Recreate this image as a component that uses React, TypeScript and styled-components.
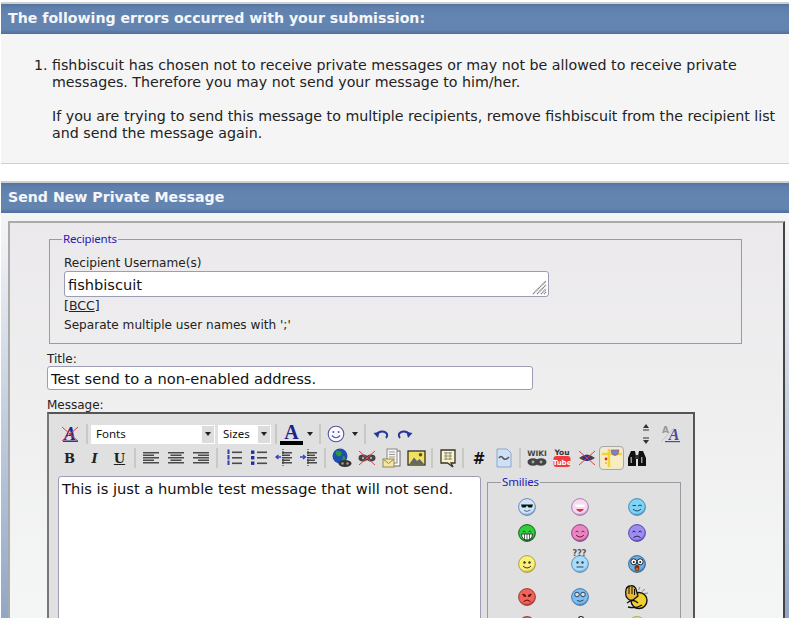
import React from 'react';
import styled, { createGlobalStyle } from 'styled-components';

const GlobalStyle = createGlobalStyle`
  html, body {
    margin: 0;
    padding: 0;
    background: #fff;
  }
  body {
    font-family: "DejaVu Sans", Verdana, sans-serif;
    color: #222;
  }
`;

const QuestionMarks = styled.span`
  position: absolute;
  top: 4px;
  left: 0;
  right: 0;
  text-align: center;
  font-size: 8px;
  line-height: 8px;
  font-weight: 700;
  color: #555;
`;

const Icon = ({ children }: { children: React.ReactNode }) => (
  <svg width="20" height="20" viewBox="0 0 20 20">
    {children}
  </svg>
);

const Lines = ({ rows }: { rows: [number, number][] }) => (
  <>
    {rows.map(([x, w], i) => (
      <rect key={i} x={x} y={4 + i * 2.5} width={w} height="1.5" fill="#4a4a4a" />
    ))}
  </>
);

const RedX = () => (
  <path d="M2 3 L18 17 M18 3 L2 17" stroke="#e0404a" strokeWidth="1" fill="none" />
);

const RemoveFormat = () => (
  <Icon>
    <text x="10" y="16" textAnchor="middle" fontFamily="Liberation Serif" fontWeight="700" fontStyle="italic" fontSize="18" fill="#24248c">A</text>
    <rect x="3" y="16.5" width="15" height="1.4" fill="#24248c" />
    <RedX />
  </Icon>
);

const Caret = styled.span`
  width: 0;
  height: 0;
  border-left: 3.5px solid transparent;
  border-right: 3.5px solid transparent;
  border-top: 4px solid #222;
`;

const Smile = () => (
  <svg width="18" height="18" viewBox="0 0 18 18">
    <circle cx="9" cy="9" r="7.8" fill="#fafaff" stroke="#5555aa" strokeWidth="1.1" />
    <circle cx="6.4" cy="7" r="1" fill="#5555aa" />
    <circle cx="11.6" cy="7" r="1" fill="#5555aa" />
    <path d="M4.8 10.5 Q9 15 13.2 10.5" stroke="#5555aa" strokeWidth="1.1" fill="none" />
  </svg>
);

const Undo = () => (
  <Icon>
    <path d="M7 14 L2.5 9 L8.5 8 Z" fill="#24369c" />
    <path d="M5.5 10.5 C8 6.5 14 6.5 16 10 C16.6 11.5 16 13 15 14" stroke="#24369c" strokeWidth="2" fill="none" />
  </Icon>
);

const Redo = () => (
  <Icon>
    <path d="M13 14 L17.5 9 L11.5 8 Z" fill="#24369c" />
    <path d="M14.5 10.5 C12 6.5 6 6.5 4 10 C3.4 11.5 4 13 5 14" stroke="#24369c" strokeWidth="2" fill="none" />
  </Icon>
);

const OrderedList = () => (
  <Icon>
    {[3.5, 9, 14.5].map((y) => (
      <g key={y}>
        <rect x="3.5" y={y - 2} width="2" height="4.5" fill="#2f3fa8" />
        <rect x="8" y={y} width="10" height="1.6" fill="#4a4a4a" />
      </g>
    ))}
  </Icon>
);

const BulletList = () => (
  <Icon>
    {[3.5, 9, 14.5].map((y) => (
      <g key={y}>
        <rect x="2" y={y - 1} width="3.4" height="3.4" fill="#1e2fa0" />
        <rect x="8" y={y} width="10" height="1.6" fill="#4a4a4a" />
      </g>
    ))}
  </Icon>
);

const Dent = ({ flip }: { flip?: boolean }) => (
  <Icon>
    <Lines rows={[[8, 10], [8, 8], [8, 10], [8, 8], [8, 10]]} />
    <path d="M9 1 V19" stroke="#222" strokeWidth="1" strokeDasharray="1 1" />
    <path d={flip ? 'M1 9 H6 M4 7 L6.5 9 L4 11' : 'M2 9 H7 M4.5 7 L2 9 L4.5 11'} stroke="#3046c0" strokeWidth="1.3" fill="none" />
  </Icon>
);

const Globe = () => (
  <Icon>
    <circle cx="8" cy="8" r="7.5" fill="#1d4fb0" />
    <path d="M4 3 Q8 2 10 5 Q9 9 6 8 Q3 7 4 3 M11 8 Q14 8 13 12 L10 13 Z" fill="#2b9a35" />
    <ellipse cx="13" cy="15.5" rx="6.5" ry="3.4" fill="#333" />
    <circle cx="10.5" cy="15.5" r="1.3" fill="#999" />
    <circle cx="15.5" cy="15.5" r="1.3" fill="#999" />
  </Icon>
);

const Unlink = () => (
  <Icon>
    <ellipse cx="6" cy="10" rx="4.5" ry="3.4" fill="#444" />
    <ellipse cx="14" cy="10" rx="4.5" ry="3.4" fill="#444" />
    <circle cx="6" cy="10" r="1.2" fill="#aaa" />
    <circle cx="14" cy="10" r="1.2" fill="#aaa" />
    <RedX />
  </Icon>
);

const MailDoc = () => (
  <Icon>
    <rect x="11" y="3" width="7" height="15" fill="#fff" stroke="#666" />
    <rect x="5" y="1" width="10" height="14" fill="#f4f4f4" stroke="#888" />
    <path d="M7 4 H13 M7 6.5 H13 M7 9 H13" stroke="#999" strokeWidth="1" />
    <rect x="1" y="11" width="11" height="8" fill="#f3e6a8" stroke="#9a8a45" />
    <path d="M1 11 L6.5 15.5 L12 11" stroke="#9a8a45" fill="none" />
  </Icon>
);

const ImageIcon = () => (
  <Icon>
    <rect x="1" y="3" width="17" height="14" fill="#f2e15a" stroke="#222" strokeWidth="1.2" />
    <circle cx="13.5" cy="6.8" r="1.8" fill="#55502a" />
    <path d="M2 16.5 L7 9.5 L10 13 L12.5 11 L17.5 16.5 Z" fill="#666" />
  </Icon>
);

const Quote = () => (
  <Icon>
    <path d="M3 2 H17 V15 H13 L15 19 L9.5 15 H3 Z" fill="#fbf4bd" stroke="#333" strokeWidth="1.3" />
    <path d="M6 5 H14 M6 8 H14 M6 11 H14 M8 4 V12 M12 4 V12" stroke="#888" strokeWidth="1" />
  </Icon>
);

const Hash = () => (
  <Icon>
    <text x="10" y="15.5" textAnchor="middle" fontFamily="DejaVu Sans" fontWeight="700" fontSize="15" fill="#111">#</text>
  </Icon>
);

const PageIcon = () => (
  <Icon>
    <path d="M3 1 H13 L17 5 V19 H3 Z" fill="#cfe0f4" stroke="#8fa8cc" />
    <path d="M5 10 Q7 7 9 10 T15 9" stroke="#555" strokeWidth="1.6" fill="none" />
  </Icon>
);

const Wiki = () => (
  <svg width="22" height="20" viewBox="0 0 22 20">
    <text x="11" y="8" textAnchor="middle" fontFamily="DejaVu Sans" fontWeight="700" fontSize="7.5" fill="#444">WIKI</text>
    <ellipse cx="7" cy="14" rx="5.5" ry="3.8" fill="#444" />
    <ellipse cx="15" cy="14" rx="5.5" ry="3.8" fill="#444" />
    <circle cx="7" cy="14" r="1.4" fill="#aaa" />
    <circle cx="15" cy="14" r="1.4" fill="#aaa" />
  </svg>
);

const YouTube = () => (
  <svg width="18" height="20" viewBox="0 0 18 20">
    <text x="9" y="7" textAnchor="middle" fontFamily="DejaVu Sans" fontWeight="700" fontSize="7.5" fill="#333">You</text>
    <rect x="0.5" y="8" width="17" height="11" rx="3" fill="#f03c40" />
    <text x="9" y="16.5" textAnchor="middle" fontFamily="DejaVu Sans" fontWeight="700" fontSize="7" fill="#fff">Tube</text>
  </svg>
);

const HiddenEye = () => (
  <Icon>
    <path d="M2 10 Q10 3 18 10 Q10 16 2 10 Z" fill="#444" />
    <circle cx="10" cy="10" r="3" fill="#2230a8" />
    <RedX />
  </Icon>
);

const MapIcon = () => (
  <svg width="20" height="18" viewBox="0 0 20 18">
    <rect x="0" y="0" width="20" height="18" fill="#f6edc2" />
    <path d="M0 5 H20 M7 0 V18" stroke="#f2d23c" strokeWidth="2.5" />
    <path d="M9 1 H17 L16 5 Q13 8 10 5 Z" fill="#5d8fd6" stroke="#c44" strokeWidth="0.7" />
    <circle cx="4" cy="10" r="1.4" fill="#d23" />
    <circle cx="4" cy="14" r="1.1" fill="#e8b93a" />
  </svg>
);

const Binoculars = () => (
  <Icon>
    <path d="M4 3 H8 L9 8 V18 H1 V10 Z M12 3 H16 L19 10 V18 H11 V8 Z" fill="#111" />
    <rect x="8" y="7" width="4" height="4" fill="#333" />
    <rect x="3.5" y="9" width="1.5" height="6" fill="#999" />
    <rect x="14" y="9" width="1.5" height="6" fill="#999" />
  </Icon>
);

const ResizeArrows = () => (
  <svg width="12" height="22" viewBox="0 0 12 22">
    <path d="M6 1 L9 5 H3 Z M3 6.5 H9 V7.5 H3 Z M3 14.5 H9 V15.5 H3 Z M6 21 L3 17 H9 Z" fill="#333" />
  </svg>
);

const SwapSize = () => (
  <svg width="20" height="18" viewBox="0 0 20 18">
    <text x="4.5" y="8" textAnchor="middle" fontFamily="DejaVu Sans" fontSize="9" fontWeight="700" fill="#999">A</text>
    <path d="M0 17 L13 3" stroke="#c4c4c4" strokeWidth="1" />
    <text x="13" y="15" textAnchor="middle" fontFamily="Liberation Serif" fontSize="16" fontStyle="italic" fontWeight="700" fill="#4b4ba0">A</text>
    <rect x="4" y="16" width="15" height="1.2" fill="#4b4ba0" />
  </svg>
);

const ResizeGrip = () => (
  <svg width="15" height="15" viewBox="0 0 15 15">
    <path d="M1 14 L14 1 M5 14 L14 5 M9 14 L14 9 M12 14 L14 12" stroke="#7d7d7d" strokeWidth="1.4" strokeDasharray="1.2 0.5" />
  </svg>
);

type Mood = {
  base: string;
  dark: string;
  face: React.ReactNode;
  top?: React.ReactNode;
};

const eyes = (c = '#333') => (
  <>
    <circle cx="6.5" cy="7.5" r="1.2" fill={c} />
    <circle cx="11.5" cy="7.5" r="1.2" fill={c} />
  </>
);

const closedEyes = (c = '#444') => (
  <path d="M4.5 8 Q6 6 7.5 8 M10.5 8 Q12 6 13.5 8" stroke={c} strokeWidth="1" fill="none" />
);

const smile = (c = '#333') => <path d="M5 11 Q9 15 13 11" stroke={c} strokeWidth="1" fill="none" />;
const frown = (c = '#333') => <path d="M5.5 13.5 Q9 10.5 12.5 13.5" stroke={c} strokeWidth="1" fill="none" />;

const moods: Mood[] = [
  { base: '#cfe6fa', dark: '#5f7fb4', face: <><path d="M3 6.5 H15 L14 9.5 H10.5 L9 7.5 L7.5 9.5 H4 Z" fill="#111" /><path d="M6 12.5 Q9 14.5 12.5 12" stroke="#567" fill="none" /></> },
  { base: '#f7d9f0', dark: '#a070a8', face: <><path d="M4 6.5 H14 L13 9 H5 Z" fill="#fff" /><path d="M5 11 H13 Q9 17 5 11 Z" fill="#d8324c" /></> },
  { base: '#7fd4f5', dark: '#3f80b8', face: <><path d="M4.5 7.5 H8 M10 8 Q12 6 14 8" stroke="#246" strokeWidth="1" fill="none" />{smile('#246')}</> },
  { base: '#2fcf3c', dark: '#124f1a', face: <>{closedEyes('#063')}<path d="M3.5 10 H14.5 Q14 16 9 16 Q4 16 3.5 10 Z" fill="#fff" stroke="#222" strokeWidth="0.8" /><path d="M6.5 10 V16 M9 10 V16 M11.5 10 V16" stroke="#222" strokeWidth="0.7" /></> },
  { base: '#ec85c4', dark: '#7a3c7c', face: <>{closedEyes('#632')}{smile('#622')}</> },
  { base: '#9d8cf2', dark: '#4a3ca0', face: <>{closedEyes('#224')}{frown('#224')}</> },
  { base: '#fbf078', dark: '#a59838', face: <>{eyes()}{smile()}</> },
  {
    base: '#a8dcf8',
    dark: '#5b88b8',
    face: <>{eyes('#345')}<path d="M5.5 12 H12.5" stroke="#345" /></>,
    top: <QuestionMarks>???</QuestionMarks>,
  },
  { base: '#6cb0ea', dark: '#2d5c88', face: <><circle cx="5.8" cy="6.8" r="3" fill="#fff" stroke="#222" /><circle cx="12.2" cy="6.8" r="3" fill="#fff" stroke="#222" /><circle cx="5.8" cy="7" r="1" fill="#111" /><circle cx="12.2" cy="7" r="1" fill="#111" /><ellipse cx="9" cy="13" rx="2.4" ry="3" fill="#7a2a05" /><ellipse cx="9" cy="14" rx="1.4" ry="1.6" fill="#e06010" /></> },
  { base: '#f2645a', dark: '#943028', face: <><path d="M4.5 6 L8 8.5 M13.5 6 L10 8.5" stroke="#511" strokeWidth="1.4" />{eyes('#511')}{frown('#511')}</> },
  { base: '#7cc0f2', dark: '#3d6fa8', face: <><circle cx="6" cy="6.5" r="2.3" fill="#cde" stroke="#345" /><circle cx="12" cy="6.5" r="2.3" fill="#cde" stroke="#345" /><path d="M6 12.5 Q9 14.5 12.5 12" stroke="#345" fill="none" /></> },
];

const Face = ({ mood, id }: { mood: Mood; id: number }) => (
  <svg width="18" height="18" viewBox="0 0 18 18">
    <defs>
      <radialGradient id={`smile${id}`} cx="45%" cy="35%" r="70%">
        <stop offset="0%" stopColor={mood.base} />
        <stop offset="70%" stopColor={mood.base} />
        <stop offset="100%" stopColor={mood.dark} />
      </radialGradient>
    </defs>
    <circle cx="9" cy="9" r="8.4" fill={`url(#smile${id})`} stroke={mood.dark} strokeWidth="0.9" />
    {mood.face}
  </svg>
);

const WavingHand = () => (
  <svg width="25" height="26" viewBox="0 0 25 26">
    <circle cx="15" cy="16.5" r="8" fill="#f0d030" stroke="#111" strokeWidth="1.4" />
    <path d="M2 12 C1 7 2 2 6 2 C9 1 12 3 12.5 7 L14 12 L9 16 C6 17 3 15 2 12 Z" fill="#e8b838" stroke="#111" strokeWidth="1.3" />
    <path d="M5 3 V10 M8 3 V10 M10.5 5 V11" stroke="#111" strokeWidth="1" />
    <path d="M3 19 Q9 14 14 19 M4 23 Q12 25 18 21" stroke="#111" strokeWidth="1.3" fill="none" />
    <path d="M16 3 L14.5 6 M21 5 L18 7.5 M24 9 L20 9.5" stroke="#888" strokeWidth="1" />
  </svg>
);

const PeekFigure = () => (
  <svg width="18" height="18" viewBox="0 0 18 18">
    <circle cx="10" cy="3" r="2.5" fill="#fff" stroke="#333" strokeWidth="1.2" />
  </svg>
);

const App: React.FC = () => {
  return (
    <Page>
      <GlobalStyle />
      <ErrorBlock>
        <BlockHeader>The following errors occurred with your submission:</BlockHeader>
        <ErrorBody>
          <ErrorList>
            <li>
              fishbiscuit has chosen not to receive private messages or may not be allowed to receive private messages. Therefore you may not send your message to him/her.
              <ErrorNote>
                If you are trying to send this message to multiple recipients, remove fishbiscuit from the recipient list and send the message again.
              </ErrorNote>
            </li>
          </ErrorList>
        </ErrorBody>
      </ErrorBlock>

      <SendBlock>
        <BlockHeader>Send New Private Message</BlockHeader>
        <SendBody>
          <Panel>
            <Recipients>
              <RecipientsLegend>Recipients</RecipientsLegend>
              <SmallLabel>Recipient Username(s)</SmallLabel>
              <RecipientWrap>
                <RecipientBox defaultValue="fishbiscuit" />
                <GripSpot><ResizeGrip /></GripSpot>
              </RecipientWrap>
              <BccLine>[<BccLink href="#bcc">BCC</BccLink>]</BccLine>
              <SmallLabel>Separate multiple user names with ';'</SmallLabel>
            </Recipients>

            <FieldLabel>Title:</FieldLabel>
            <TitleInput defaultValue="Test send to a non-enabled address." />

            <FieldLabel>Message:</FieldLabel>
            <Editor>
              <ToolRow>
                <ToolButton><RemoveFormat /></ToolButton>
                <Separator $space={9} />
                <FakeSelect $width={124}>
                  Fonts
                  <SelectArrow><Caret /></SelectArrow>
                </FakeSelect>
                <FakeSelect $width={53} $shift={3}>
                  Sizes
                  <SelectArrow><Caret /></SelectArrow>
                </FakeSelect>
                <Separator $space={9} />
                <ColorButton>
                  <ColorLetter>A</ColorLetter>
                  <ColorBar />
                </ColorButton>
                <ArrowSlot><Caret /></ArrowSlot>
                <Separator $space={6} />
                <ToolButton><Smile /></ToolButton>
                <ArrowSlot $width={13}><Caret /></ArrowSlot>
                <Separator $space={8} />
                <ToolButton $width={24}><Undo /></ToolButton>
                <ToolButton $width={24}><Redo /></ToolButton>
                <Spacer />
                <ToolButton><ResizeArrows /></ToolButton>
                <ToolButton><SwapSize /></ToolButton>
              </ToolRow>

              <ToolRow $second>
                <ToolButton><Letter $weight={700}>B</Letter></ToolButton>
                <ToolButton><Letter $italic $weight={700}>I</Letter></ToolButton>
                <ToolButton><Letter $underline $weight={700}>U</Letter></ToolButton>
                <Separator $space={6} />
                <ToolButton><Icon><Lines rows={[[2, 16], [2, 11], [2, 16], [2, 11], [2, 16]]} /></Icon></ToolButton>
                <ToolButton><Icon><Lines rows={[[2, 16], [4.5, 11], [2, 16], [4.5, 11], [2, 16]]} /></Icon></ToolButton>
                <ToolButton><Icon><Lines rows={[[2, 16], [7, 11], [2, 16], [7, 11], [2, 16]]} /></Icon></ToolButton>
                <Separator $space={8} />
                <ToolButton><OrderedList /></ToolButton>
                <ToolButton><BulletList /></ToolButton>
                <ToolButton><Dent /></ToolButton>
                <ToolButton><Dent flip /></ToolButton>
                <Separator $space={8} />
                <ToolButton><Globe /></ToolButton>
                <ToolButton><Unlink /></ToolButton>
                <ToolButton><MailDoc /></ToolButton>
                <ToolButton><ImageIcon /></ToolButton>
                <Separator $space={6} />
                <ToolButton><Quote /></ToolButton>
                <Separator $space={6} />
                <ToolButton><Hash /></ToolButton>
                <ToolButton><PageIcon /></ToolButton>
                <Separator $space={8} />
                <ToolButton><Wiki /></ToolButton>
                <ToolButton><YouTube /></ToolButton>
                <ToolButton><HiddenEye /></ToolButton>
                <ToolButton $active><MapIcon /></ToolButton>
                <ToolButton><Binoculars /></ToolButton>
              </ToolRow>

              <EditorBody>
                <MessageBox defaultValue="This is just a humble test message that will not send." />
                <Smilies>
                  <SmiliesLegend>Smilies</SmiliesLegend>
                  <SmilieGrid>
                    {moods.map((mood, i) => (
                      <SmilieCell key={i}>
                        {mood.top}
                        <Face mood={mood} id={i} />
                      </SmilieCell>
                    ))}
                    <SmilieCell><WavingHand /></SmilieCell>
                    <SmilieCell><Face mood={moods[9]} id={20} /></SmilieCell>
                    <SmilieCell><PeekFigure /></SmilieCell>
                    <SmilieCell><Face mood={moods[6]} id={21} /></SmilieCell>
                  </SmilieGrid>
                </Smilies>
              </EditorBody>
            </Editor>
          </Panel>
        </SendBody>
      </SendBlock>
    </Page>
  );
};

const Page = styled.div`
  height: 618px;
  overflow: hidden;
  padding-top: 2px;
  box-sizing: border-box;
`;

const ErrorBlock = styled.section`
  margin-left: 1px;
  border-top: 2px solid #cfcfcf;
  border-bottom: 1px solid #cfcfcf;
`;

const SendBlock = styled.section`
  margin: 17px 0 0 1px;
  border-top: 2px solid #cfcfcf;
`;

const BlockHeader = styled.h2`
  margin: 0;
  height: 30px;
  line-height: 29px;
  padding-left: 7px;
  font-size: 14.15px;
  font-weight: 700;
  color: #f4f6fa;
  background: linear-gradient(#54739f 0, #5f80ad 4px, #6585b1 50%, #6384b0 85%, #4f6e9d 100%);
`;

const ErrorBody = styled.div`
  height: 129px;
  box-sizing: border-box;
  background: #f5f5f5;
  padding: 23px 8px 0 0;
  font-size: 14.22px;
  line-height: 17px;
`;

const ErrorList = styled.ol`
  margin: 0;
  padding-left: 51px;
`;

const ErrorNote = styled.p`
  margin: 17px 0 0;
`;

const SendBody = styled.div`
  height: 406px;
  padding: 8px 4px 0 7px;
  background: linear-gradient(#f5f5f5 0, #f0f2f5 6%, #8ea5c6 100%);
`;

const Panel = styled.div`
  height: 420px;
  box-sizing: border-box;
  padding: 9px 0 0 37px;
  border-top: 2px solid #aaa;
  border-left: 2px solid #aaa;
  border-right: 2px solid #444;
  background: linear-gradient(#ebe9eb, #f4f5f5 90%);
`;

const Legend = styled.legend`
  padding: 0 1px;
  font-family: "Noto Sans", Tahoma, sans-serif;
  font-size: 11.5px;
  letter-spacing: -0.15px;
  line-height: 14px;
  color: #2020b8;
`;

const RecipientsLegend = styled(Legend)`
  margin-left: -2px;
`;

const SmiliesLegend = styled(Legend)`
  margin-left: 13px;
`;

const Recipients = styled.fieldset`
  margin: 0 0 0 2px;
  padding: 10px 0 0 14px;
  width: 693px;
  height: 112px;
  box-sizing: border-box;
  border: 1px solid #9a9aa0;
`;

const SmallLabel = styled.div`
  font-size: 12.1px;
  line-height: 15px;
  color: #222;
`;

const RecipientWrap = styled.div`
  position: relative;
  width: 485px;
  height: 26px;
`;

const GripSpot = styled.span`
  position: absolute;
  right: 2px;
  bottom: 2px;
  display: flex;
`;

const RecipientBox = styled.textarea`
  display: block;
  width: 485px;
  height: 26px;
  box-sizing: border-box;
  padding: 4px 3px 0;
  border: 1px solid #9c9cb4;
  border-radius: 3px;
  background: #fff;
  color: #111;
  font-family: "DejaVu Sans", Verdana, sans-serif;
  font-size: 14.6px;
  line-height: 18px;
  outline: none;
  overflow: hidden;
  resize: none;
`;

const BccLine = styled.div`
  margin: 1px 0 4px;
  font-size: 12.5px;
  line-height: 16px;
`;

const BccLink = styled.a`
  color: #223;
  text-decoration: underline;
`;

const FieldLabel = styled.div`
  margin-top: 6px;
  height: 16px;
  font-size: 12px;
  line-height: 19px;
  color: #222;
`;

const TitleInput = styled.input`
  display: block;
  width: 486px;
  height: 24px;
  box-sizing: border-box;
  padding: 0 3px;
  border: 1px solid #9c9cb4;
  border-radius: 3px;
  background: #fff;
  color: #111;
  font-family: "DejaVu Sans", Verdana, sans-serif;
  font-size: 14.67px;
  outline: none;
`;

const Editor = styled.div`
  width: 648px;
  height: 240px;
  box-sizing: border-box;
  padding: 9px 0 0 8px;
  background: #e0e0e0;
  border-top: 2px solid #555;
  border-left: 2px solid #777;
  border-right: 2px solid #555;
`;

const ToolRow = styled.div<{ $second?: boolean }>`
  display: flex;
  align-items: center;
  height: ${(p) => (p.$second ? '20px' : '22px')};
  margin-top: ${(p) => (p.$second ? '3px' : '0')};
  padding-right: 10px;
`;

const ToolButton = styled.span<{ $width?: number; $active?: boolean }>`
  display: flex;
  flex: none;
  align-items: center;
  justify-content: center;
  width: ${(p) => p.$width ?? 25}px;
  height: 22px;
  box-sizing: border-box;
  ${(p) =>
    p.$active &&
    `
    border: 1px solid #a8a8a0;
    border-radius: 4px;
    background: #efe9cf;
    margin: -1px 0;
    height: 24px;
  `}
`;

const Separator = styled.span<{ $space: number }>`
  flex: none;
  width: 2px;
  height: 20px;
  margin: 0 ${(p) => (p.$space - 2) / 2}px;
  background: #c9c9c4;
`;

const FakeSelect = styled.span<{ $width: number; $shift?: number }>`
  display: flex;
  flex: none;
  align-items: center;
  justify-content: space-between;
  width: ${(p) => p.$width}px;
  height: 19px;
  margin-left: ${(p) => p.$shift ?? 0}px;
  box-sizing: border-box;
  padding: 0 0 0 5px;
  background: #fff;
  font-family: "Noto Sans", Tahoma, sans-serif;
  font-size: 11.5px;
  line-height: 16px;
  color: #111;
`;

const SelectArrow = styled.span`
  display: flex;
  align-items: center;
  justify-content: center;
  width: 12px;
  height: 17px;
  margin-right: 1px;
  background: #dcdcdc;
`;

const ColorButton = styled.span`
  display: flex;
  flex: none;
  flex-direction: column;
  align-items: center;
  width: 23px;
  height: 21px;
`;

const ColorLetter = styled.span`
  font-family: "Liberation Serif", serif;
  font-size: 20px;
  font-weight: 700;
  line-height: 16px;
  color: #20208c;
`;

const ColorBar = styled.span`
  width: 23px;
  height: 4px;
  margin-top: 1px;
  background: #000;
`;

const ArrowSlot = styled.span<{ $width?: number }>`
  display: flex;
  flex: none;
  align-items: center;
  justify-content: center;
  width: ${(p) => p.$width ?? 14}px;
  height: 20px;
`;

const Spacer = styled.span`
  flex: 1;
`;

const Letter = styled.span<{ $weight?: number; $italic?: boolean; $underline?: boolean }>`
  font-family: "DejaVu Serif", serif;
  font-size: 13px;
  font-weight: ${(p) => p.$weight ?? 400};
  font-style: ${(p) => (p.$italic ? 'italic' : 'normal')};
  text-decoration: ${(p) => (p.$underline ? 'underline' : 'none')};
  color: #222;
`;

const EditorBody = styled.div`
  display: flex;
  align-items: flex-start;
  margin: 8px 0 0 1px;
`;

const MessageBox = styled.textarea`
  flex: none;
  width: 423px;
  height: 190px;
  box-sizing: border-box;
  padding: 3px;
  border: 1px solid #9c9cb4;
  border-radius: 3px;
  background: #fff;
  color: #111;
  font-family: "DejaVu Sans", Verdana, sans-serif;
  font-size: 14.67px;
  line-height: 18px;
  outline: none;
  resize: none;
`;

const Smilies = styled.fieldset`
  flex: none;
  width: 194px;
  height: 180px;
  margin: -1px 0 0 6px;
  padding: 0;
  box-sizing: border-box;
  border: 1px solid #9a9aa0;
`;

const SmilieGrid = styled.div`
  display: grid;
  grid-template-columns: 53px 53px 61px;
  grid-template-rows: 26px 26px 36px 30px 26px;
  padding: 5px 0 0 12px;
`;

const SmilieCell = styled.span`
  position: relative;
  display: flex;
  align-items: center;
  justify-content: center;
`;

export default App;
